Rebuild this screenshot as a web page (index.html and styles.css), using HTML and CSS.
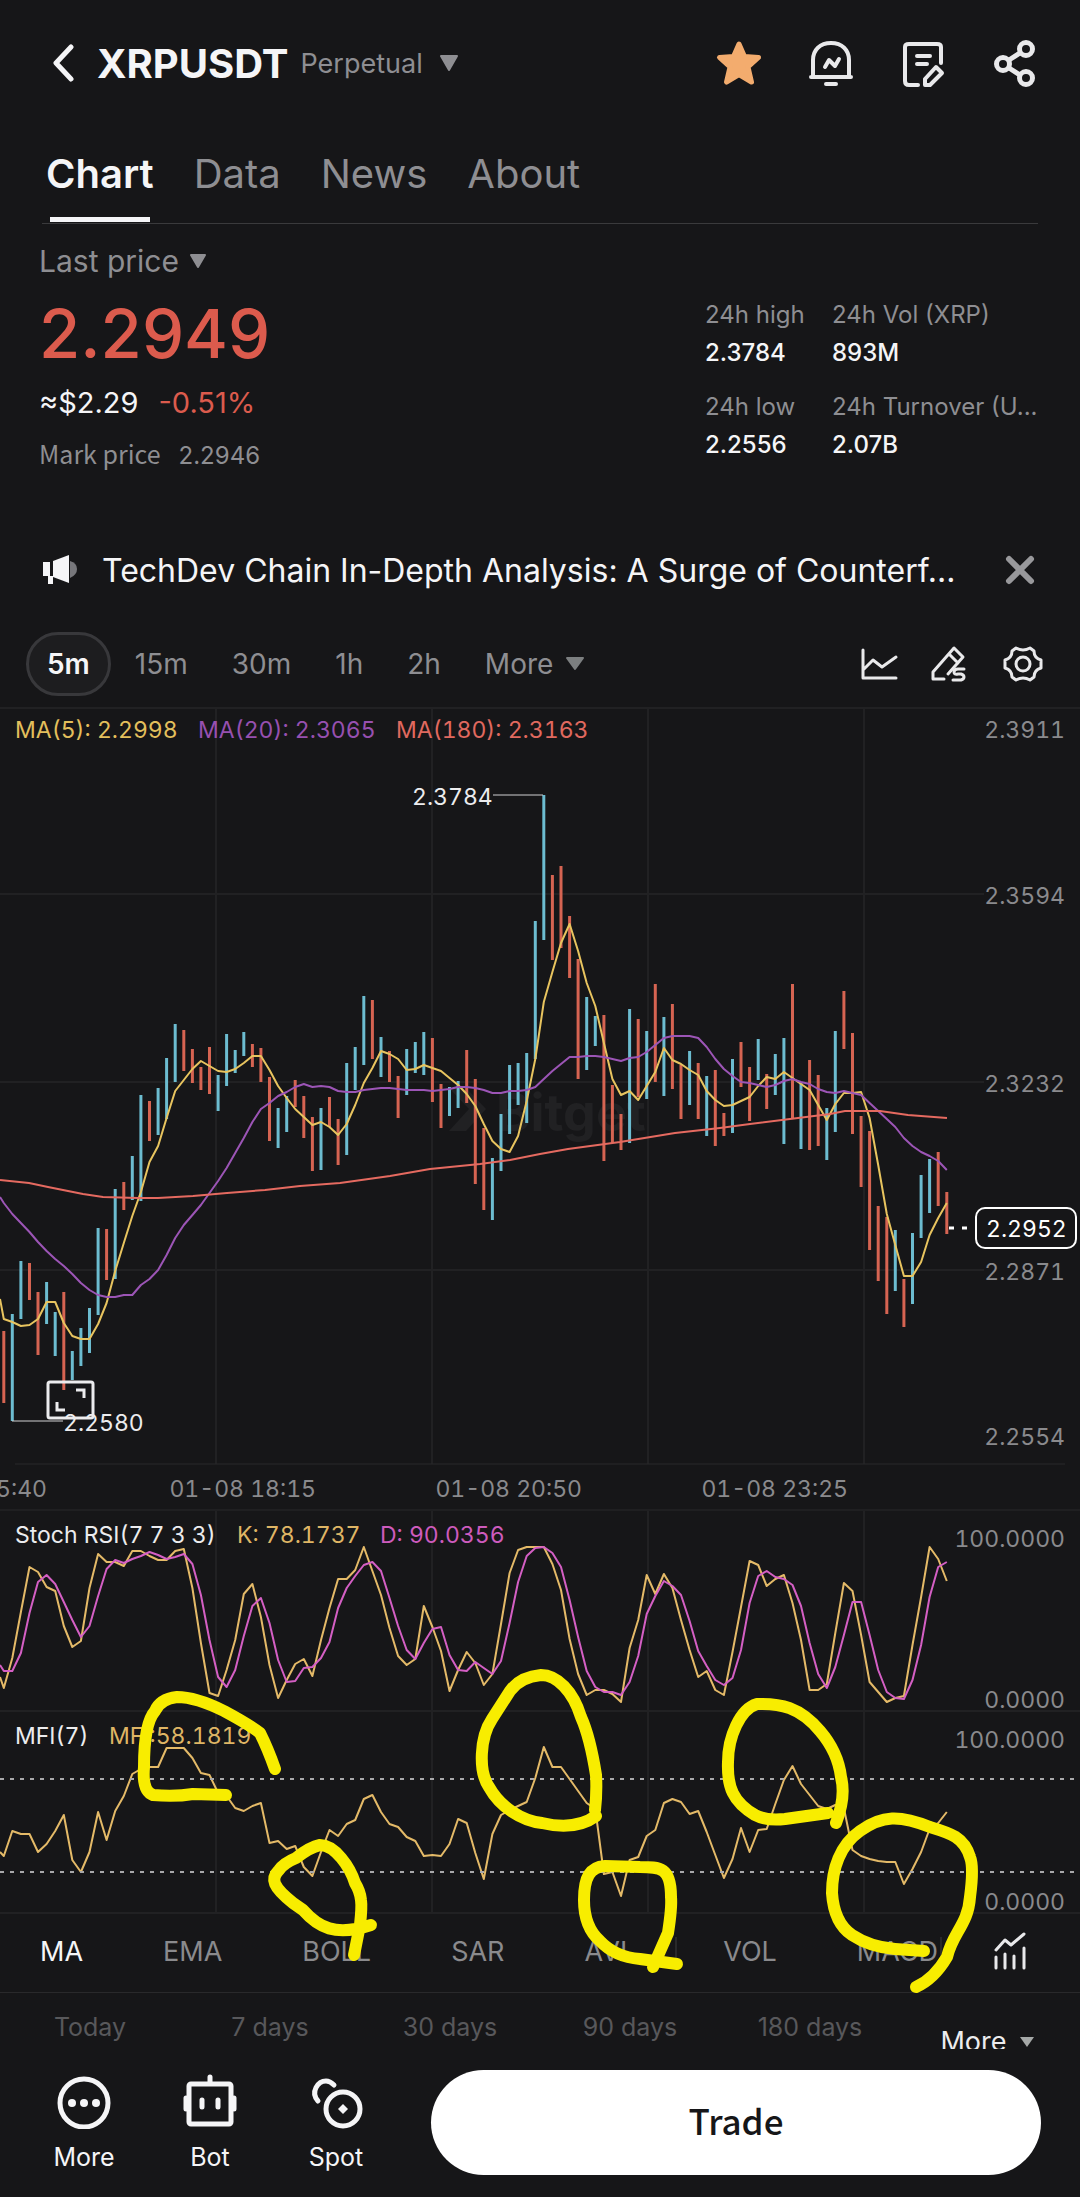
FILE: index.html
```html
<!DOCTYPE html>
<html lang="en">
<head>
    <meta charset="UTF-8">
    <meta name="viewport" content="width=device-width, initial-scale=1.0">
    <title>XRPUSDT Perpetual</title>
    <link rel="stylesheet" href="styles.css">
</head>
<body>
    <header class="topbar">
        <button class="icon-btn back" aria-label="Back">
            <svg width="24" height="38" viewBox="0 0 24 38"><path d="M20 3L5 19L20 35" fill="none" stroke="#f5f5f7" stroke-width="5" stroke-linecap="round" stroke-linejoin="round"/></svg>
        </button>
        <h1 class="symbol">XRPUSDT</h1>
        <button class="contract">Perpetual
            <svg width="20" height="16" viewBox="0 0 20 16"><path d="M2 1H18L10 15Z" fill="#8e8e92" stroke="#8e8e92" stroke-width="2" stroke-linejoin="round"/></svg>
        </button>
        <div class="actions">
            <button class="icon-btn" aria-label="Favourite">
                <svg width="48" height="48" viewBox="0 0 48 48"><path d="M24 5L29.5 17.5L43.500 18.500L33 28L36.500 43L24 35.500L11.500 43L15 28L4.500 18.500L18.500 17.500Z" fill="#f3ac6e" stroke="#f3ac6e" stroke-width="5" stroke-linejoin="round"/></svg>
            </button>
            <button class="icon-btn" aria-label="Price alert">
                <svg width="48" height="48" viewBox="0 0 48 48" fill="none" stroke="#e9e9eb" stroke-width="4" stroke-linecap="round" stroke-linejoin="round"><path d="M6 37V21C6 11 13 4 24 4S42 11 42 21V37M4 38H44M19 45H29"/><path d="M18 28L22 21L28 27L32 20"/></svg>
            </button>
            <button class="icon-btn" aria-label="Notes">
                <svg width="48" height="48" viewBox="0 0 48 48" fill="none" stroke="#e9e9eb" stroke-width="4" stroke-linecap="round" stroke-linejoin="round"><path d="M19 46H10Q6 46 6 42V8Q6 5 10 5H38Q42 5 42 8V24M18 17H31M18 25H28"/><path d="M37 28L43 34L31 46H26V40Z"/></svg>
            </button>
            <button class="icon-btn" aria-label="Share">
                <svg width="48" height="48" viewBox="0 0 48 48" fill="none" stroke="#e9e9eb" stroke-width="5"><circle cx="12" cy="25" r="6.500"/><circle cx="35" cy="10" r="6.500"/><circle cx="35" cy="39" r="6.500"/><path d="M18 21L29 14M18 29L29 36"/></svg>
            </button>
        </div>
    </header>

    <nav class="tabs">
        <a href="#chart" class="active">Chart</a>
        <a href="#data">Data</a>
        <a href="#news">News</a>
        <a href="#about">About</a>
    </nav>

    <section class="ticker">
        <div class="price-block">
            <button class="price-type">Last price
                <svg width="18" height="14" viewBox="0 0 18 14"><path d="M2 1H16L9 13Z" fill="#8e8e92" stroke="#8e8e92" stroke-width="2" stroke-linejoin="round"/></svg>
            </button>
            <p class="price">2.2949</p>
            <p class="fiat"><span>≈$2.29</span><span class="down">-0.51%</span></p>
            <p class="mark"><span>Mark price</span><span class="mark-value">2.2946</span></p>
        </div>
        <dl class="stats">
            <div><dt>24h high</dt><dd>2.3784</dd></div>
            <div><dt>24h Vol (XRP)</dt><dd>893M</dd></div>
            <div><dt>24h low</dt><dd>2.2556</dd></div>
            <div><dt>24h Turnover (U...</dt><dd>2.07B</dd></div>
        </dl>
    </section>

    <section class="notice">
        <svg width="36" height="32" viewBox="0 0 36 32"><path d="M28 7Q35 9 35 15T28 24Z" fill="#77777b"/><path d="M11 7L27 1V29L11 23Z" fill="#f5f5f7"/><path d="M1 8H8V22H11V30H6V22H1Z" fill="#f5f5f7"/></svg>
        <a href="#article">TechDev Chain In-Depth Analysis: A Surge of Counterf...</a>
        <button class="icon-btn" aria-label="Dismiss">
            <svg width="30" height="30" viewBox="0 0 30 30"><path d="M4 4L26 26M26 4L4 26" stroke="#98989b" stroke-width="6" stroke-linecap="round"/></svg>
        </button>
    </section>

    <section class="intervals">
        <button class="active">5m</button>
        <button>15m</button>
        <button>30m</button>
        <button>1h</button>
        <button>2h</button>
        <button>More
            <svg width="20" height="14" viewBox="0 0 20 14"><path d="M2 1H18L10 12Z" fill="#7c7f80" stroke="#7c7f80" stroke-width="2" stroke-linejoin="round"/></svg>
        </button>
        <div class="tools">
            <button class="icon-btn" aria-label="Chart type">
                <svg width="40" height="40" viewBox="0 0 40 40" fill="none" stroke="#e9e9eb" stroke-width="3" stroke-linecap="round" stroke-linejoin="round"><path d="M4 6V34H37M5 25L14 16L23 23L37 13"/></svg>
            </button>
            <button class="icon-btn" aria-label="Draw">
                <svg width="40" height="40" viewBox="0 0 40 40" fill="none" stroke="#e9e9eb" stroke-width="3" stroke-linecap="round" stroke-linejoin="round"><path d="M13 35H2V28L23 4L32 13L17 30M18 10L27 19"/><path d="M33 25H27Q23 25 23 28T27 30H30Q33 31 33 33T30 36H22"/></svg>
            </button>
            <button class="icon-btn" aria-label="Settings">
                <svg width="40" height="40" viewBox="0 0 40 40" fill="none" stroke="#e9e9eb" stroke-width="3" stroke-linejoin="round"><path d="M13 4Q20 8 27 4L31 7Q31 14 38 16V24Q31 26 31 33L27 36Q20 32 13 36L9 33Q9 26 2 24V16Q9 14 9 7Z"/><circle cx="20" cy="20" r="7"/></svg>
            </button>
        </div>
    </section>

    <main class="board">
        <svg class="chart" id="chart" viewBox="0 0 1080 1207">
            <g class="grid">
                <path d="M216 2V757M432 2V757M648 2V757M864 2V757M216 804V1206M432 804V1206M648 804V1206M864 804V1206"/>
                <path d="M0 187H984M0 375H984M0 563H984M0 1004H1080M0 1206H1080M0 1H1080"/>
                <path class="thin" d="M15 757H1065M0 803H1080"/>
            </g>
            <g class="watermark">
                <path d="M449 381H466L486 402L466 424H449L469 402Z"/>
                <text x="496" y="424">Bitget</text>
            </g>
            <g id="candles"></g>
            <g id="lines"></g>
            <path class="pointer" d="M493 88H543M12 714H63"/>
            <text class="note" x="412" y="98">2.3784</text>
            <text class="note" x="63" y="724">2.2580</text>
            <path class="last-line" d="M949 521H970"/>
            <path class="level" d="M0 1072H1080M0 1165H1080"/>
            <g class="axis">
                <text x="1065" y="31">2.3911</text>
                <text x="1065" y="197">2.3594</text>
                <text x="1065" y="385">2.3232</text>
                <text x="1065" y="573">2.2871</text>
                <text x="1065" y="738">2.2554</text>
                <text x="47" y="790">01-08 15:40</text>
                <text x="316" y="790">01-08 18:15</text>
                <text x="582" y="790">01-08 20:50</text>
                <text x="848" y="790">01-08 23:25</text>
                <text x="1065" y="840">100.0000</text>
                <text x="1065" y="1001">0.0000</text>
                <text x="1065" y="1041">100.0000</text>
                <text x="1065" y="1203">0.0000</text>
            </g>
            <rect class="last-box" x="976" y="501" width="100" height="40" rx="9"/>
            <text class="note strong" x="986" y="530">2.2952</text>
            <g class="expand">
                <rect x="48" y="675" width="45" height="36" rx="2"/>
                <path d="M76 683H84V691M57 695V703H65"/>
            </g>
            <g class="legend">
                <text x="15" y="31"><tspan class="ma5">MA(5): 2.2998</tspan></text>
                <text x="198" y="31"><tspan class="ma20">MA(20): 2.3065</tspan></text>
                <text x="396" y="31"><tspan class="ma180">MA(180): 2.3163</tspan></text>
                <text x="15" y="836">Stoch RSI(7 7 3 3)</text>
                <text x="237" y="836"><tspan class="k">K: 78.1737</tspan></text>
                <text x="380" y="836"><tspan class="d">D: 90.0356</tspan></text>
                <text x="15" y="1037">MFI(7)</text>
                <text x="109" y="1037"><tspan class="k">MFI:58.1819</tspan></text>
            </g>
        </svg>

        <section class="indicators">
            <button class="active">MA</button>
            <button>EMA</button>
            <button>BOLL</button>
            <button>SAR</button>
            <button>AVL</button>
            <i class="sep"></i>
            <button>VOL</button>
            <button>MACD</button>
            <i class="sep last"></i>
            <button class="icon-btn" aria-label="All indicators">
                <svg width="36" height="40" viewBox="0 0 36 40" fill="none" stroke="#e9e9eb" stroke-width="3" stroke-linecap="round" stroke-linejoin="round"><path d="M4 19L13 9L19 14L32 3M4 26V37M13 23V37M22 25V37M32 17V37"/></svg>
            </button>
        </section>

        <!-- hand drawn circles on the oversold / overbought zones -->
        <svg class="marker" viewBox="0 0 1080 1290">
            <path d="M275 1062Q268 1042 260 1026Q250 1018 224 1004Q196 990 177 990Q160 992 155 1004C146 1014 144 1040 144 1060Q142 1084 153 1088Q175 1090 193 1087L226 1088"/>
            <path d="M354 1248L360 1218Q362 1200 361 1193Q360 1184 355 1176C350 1160 335 1138 320 1138Q310 1140 296 1151Q284 1156 279 1163C270 1172 273 1180 293 1196L303 1203C318 1220 335 1230 371 1218"/>
            <path d="M595 1103Q597 1085 596 1068Q590 1030 581 1010C573 984 557 968 541 968Q520 970 510 984L492 1012C480 1030 478 1064 489 1080C500 1100 522 1114 542 1116Q575 1124 596 1109"/>
            <path d="M653 1260L668 1226Q672 1200 671 1190C671 1160 660 1160 640 1160L605 1159C590 1160 584 1170 584 1193Q584 1220 600 1234Q615 1250 640 1252L677 1257"/>
            <path d="M836 1116Q846 1090 841 1070Q838 1045 820 1024C800 1000 780 996 757 997C740 1002 728 1030 728 1055C727 1080 733 1095 755 1108Q766 1114 785 1112L828 1106"/>
            <path d="M916 1280Q934 1272 947 1250C953 1225 968 1218 970 1190Q974 1160 970 1150C964 1130 950 1126 930 1120C900 1108 882 1108 860 1124C840 1138 832 1162 832 1186Q834 1216 852 1228Q870 1240 895 1242L924 1244"/>
        </svg>
    </main>

    <section class="periods">
        <span>Today</span>
        <span>7 days</span>
        <span>30 days</span>
        <span>90 days</span>
        <span>180 days</span>
        <button>More
            <svg width="16" height="12" viewBox="0 0 16 12"><path d="M1 1H15L8 11Z" fill="#a5a8a7"/></svg>
        </button>
    </section>

    <footer class="bottombar">
        <a href="#more">
            <svg width="56" height="56" viewBox="0 0 56 56"><circle cx="28" cy="30" r="24" fill="none" stroke="#f5f5f7" stroke-width="5"/><g fill="#f5f5f7"><circle cx="16" cy="30" r="4"/><circle cx="28" cy="30" r="4"/><circle cx="40" cy="30" r="4"/></g></svg>
            More
        </a>
        <a href="#bot">
            <svg width="56" height="56" viewBox="0 0 56 56" fill="none" stroke="#f5f5f7" stroke-width="5" stroke-linecap="round"><rect x="7" y="11" width="42" height="40" rx="2"/><path d="M28 4V10M4 25V36M52 25V36M20 27V34M36 27V34"/></svg>
            Bot
        </a>
        <a href="#spot">
            <svg width="56" height="56" viewBox="0 0 56 56" fill="none" stroke="#f5f5f7" stroke-width="5" stroke-linecap="round"><circle cx="35" cy="36" r="17"/><path d="M10 28C2 19 10 8 18 8Q22 8 26 12"/><path d="M35 31L40 36L35 41L30 36Z" fill="#f5f5f7" stroke="none"/></svg>
            Spot
        </a>
        <button class="trade">Trade</button>
    </footer>

    <script src="chart.js"></script>
</body>
</html>
```
FILE: styles.css
```css
* {
    box-sizing: border-box;
}

body {
    margin: 0;
    background: #161618;
    color: #f5f5f7;
    font-family: Inter, "Liberation Sans", sans-serif;
    overflow-x: hidden;
}

button {
    font: inherit;
    color: inherit;
    background: none;
    border: none;
    padding: 0;
}

a {
    color: inherit;
    text-decoration: none;
}

p, h1, dl, dd {
    margin: 0;
}

svg {
    display: block;
    flex: none;
}

/* header */
.topbar {
    display: flex;
    align-items: center;
    height: 126px;
    padding: 0 41px 0 51px;
}

.back {
    width: 46px;
}

.symbol {
    font-size: 40px;
    font-weight: 700;
}

.contract {
    display: flex;
    align-items: center;
    gap: 16px;
    margin-left: 12px;
    font-size: 27px;
    color: #8e8e92;
}

.actions {
    display: flex;
    gap: 44px;
    margin-left: auto;
}

.tabs {
    display: flex;
    gap: 40px;
    height: 98px;
    margin: 0 42px;
    padding-left: 4px;
    border-bottom: 1px solid #3a3a3c;
    font-size: 40px;
    line-height: 96px;
    color: #8e8e92;
}

.tabs .active {
    position: relative;
    font-weight: 600;
    color: #f5f5f7;
}

.tabs .active::after {
    content: "";
    position: absolute;
    left: 4px;
    right: 4px;
    bottom: 1px;
    height: 5px;
    background: #f5f5f7;
}

/* price and 24h numbers */
.ticker {
    display: flex;
    justify-content: space-between;
    height: 286px;
    padding: 16px 40px 0 39px;
}

.price-type {
    display: flex;
    align-items: center;
    gap: 10px;
    font-size: 30px;
    line-height: 42px;
    color: #8e8e92;
}

.price {
    margin-top: 8px;
    font-size: 67px;
    font-weight: 500;
    line-height: 88px;
    color: #dc5b4d;
}

.fiat {
    display: flex;
    gap: 20px;
    font-size: 29px;
    line-height: 50px;
}

.down {
    color: #dc5b4d;
}

.mark {
    display: flex;
    align-items: baseline;
    gap: 18px;
    font-size: 25px;
    line-height: 50px;
    color: #8e8e92;
    font-family: "Noto Sans CJK SC", sans-serif;
}

.mark-value {
    font-family: Inter, sans-serif;
    font-size: 24px;
}

.stats {
    display: grid;
    grid-template-columns: 100px 208px;
    column-gap: 27px;
    align-content: start;
    padding-top: 57px;
    font-size: 24px;
    line-height: 36px;
}

.stats div {
    height: 92px;
}

.stats dt {
    color: #8e8e92;
    white-space: nowrap;
}

.stats dd {
    margin-top: 2px;
    font-weight: 500;
}

.notice {
    display: flex;
    align-items: center;
    height: 120px;
    padding: 0 45px 0 42px;
}

.notice a {
    margin: 0 auto 0 24px;
    font-size: 32px;
    white-space: nowrap;
}

/* interval switch */
.intervals {
    display: flex;
    align-items: center;
    gap: 44px;
    height: 77px;
    padding: 0 37px 10px 26px;
    font-size: 28px;
    color: #8e8e92;
}

.intervals button {
    display: flex;
    align-items: center;
    gap: 12px;
}

.intervals .active {
    height: 64px;
    padding: 0 18px;
    margin-right: -20px;
    border: 3px solid #38383b;
    border-radius: 32px;
    background: #1d1d1f;
    color: #f5f5f7;
    font-weight: 600;
}

.tools {
    display: flex;
    gap: 32px;
    margin-left: auto;
}

/* chart */
.board {
    position: relative;
}

.chart {
    width: 100%;
    font-size: 23px;
    font-variant-numeric: tabular-nums;
}

.grid path {
    stroke: #212123;
    stroke-width: 2;
}

.grid .thin {
    stroke: #29292b;
    stroke-width: 1;
}

.watermark {
    fill: #212123;
    font-size: 52px;
    font-weight: 700;
}

.series {
    fill: none;
    stroke-width: 2;
    stroke-linejoin: round;
}

.up-bar {
    stroke: #6cbcd0;
    stroke-width: 3;
}

.down-bar {
    stroke: #d66452;
    stroke-width: 3;
}

.pointer {
    stroke: #cfcfd1;
}

.note,
.legend {
    fill: #ececee;
}

.strong {
    fill: #ffffff;
}

.last-line {
    stroke: #ffffff;
    stroke-width: 3;
    stroke-dasharray: 5 8;
}

.last-box {
    fill: #161618;
    stroke: #ffffff;
    stroke-width: 2;
}

.level {
    stroke: #a9a9ab;
    stroke-width: 2;
    stroke-dasharray: 4 6;
}

.axis {
    fill: #8a8a8d;
    text-anchor: end;
}

.expand rect,
.expand path {
    fill: none;
    stroke: #ececee;
    stroke-width: 3;
}

.ma5 { fill: #e3bf5c; }
.ma20 { fill: #9750b0; }
.ma180 { fill: #e0695f; }
.k { fill: #dfb565; }
.d { fill: #cd5bbd; }

.marker {
    position: absolute;
    top: 0;
    left: 0;
    width: 100%;
    fill: none;
    stroke: #f8ed00;
    stroke-width: 12;
    stroke-linecap: round;
    stroke-linejoin: round;
    pointer-events: none;
}

.indicators {
    display: flex;
    align-items: center;
    gap: 80px;
    height: 79px;
    padding: 0 0 4px 40px;
    border-bottom: 1px solid #29292b;
    font-size: 27px;
    color: #8a8a8d;
}

.indicators .active {
    color: #f5f5f7;
}

.sep {
    flex: none;
    width: 2px;
    height: 28px;
    margin: 0 -34px 0 -40px;
    background: #29292b;
}

.sep.last {
    margin: 0 -30px 0 -78px;
}

.periods {
    display: grid;
    grid-template-columns: repeat(6, 1fr);
    height: 56px;
    padding-top: 14px;
    overflow: hidden;
    font-size: 25px;
    line-height: 40px;
    text-align: center;
    color: #58585b;
}

.periods button {
    display: flex;
    align-items: center;
    justify-content: center;
    gap: 12px;
    height: 40px;
    margin: 15px 5px 0 0;
    font-size: 27px;
    color: #ececee;
}

/* bottom bar */
.bottombar {
    display: flex;
    height: 148px;
    padding: 21px 39px 20px 21px;
}

.bottombar a {
    display: flex;
    flex-direction: column;
    align-items: center;
    gap: 10px;
    width: 126px;
    padding-top: 3px;
    font-size: 25px;
    line-height: 36px;
}

.trade {
    flex: 1;
    height: 105px;
    margin-left: 32px;
    padding-bottom: 7px;
    border-radius: 53px;
    background: #ffffff;
    color: #161618;
    font-family: "Noto Sans CJK SC", sans-serif;
    font-size: 35px;
    font-weight: 500;
}
```
FILE: chart.js
```js
const NS = "http://www.w3.org/2000/svg";
const STEP = 8.573;
const START = 3.75;
const TOP = 707;

// direction, high - low for every 5m candle
const candles = `d1331-1403 u1314-1421 u1261-1319 d1263-1300 d1292-1355 u1282-1324 u1312-1356 d1292-1390 u1351-1380 u1328-1366
u1308-1353 u1228-1315 d1229-1280 u1189-1279 d1182-1210 u1156-1200 u1095-1201 d1101-1141 u1088-1135 u1058-1119
u1024-1082 d1030-1071 d1049-1083 d1067-1090 d1047-1094 u1075-1111 u1034-1086 u1050-1073 u1032-1056 d1044-1067
d1048-1082 d1077-1141 u1108-1148 u1096-1132 d1080-1107 d1096-1138 d1117-1171 u1108-1170 d1097-1127 d1119-1165
u1063-1155 u1047-1090 u996-1065 d1000-1059 u1037-1077 d1051-1082 d1076-1118 u1049-1095 u1042-1073 u1032-1075
d1038-1102 d1084-1128 u1087-1116 u1081-1108 d1050-1103 d1079-1184 d1128-1210 u1158-1220 u1114-1171 u1065-1134
u1063-1105 u1053-1123 u921-1059 u795-940 d875-960 d866-948 d916-978 d959-1079 u997-1070 u1016-1046
d1015-1161 d1085-1143 d1114-1150 u1009-1143 d1019-1097 u1031-1099 d984-1082 u1017-1096 d1004-1089 d1065-1119
u1051-1105 d1063-1119 u1076-1136 d1070-1146 d1113-1136 u1059-1133 d1042-1087 d1067-1121 u1039-1080 d1074-1109
u1054-1095 u1038-1144 d984-1119 u1082-1149 d1060-1150 d1075-1146 u1108-1160 u1031-1132 d991-1049 d1033-1134
d1116-1187 d1131-1250 d1206-1281 d1217-1314 u1230-1291 d1279-1327 u1233-1304 u1175-1238 u1159-1213 d1152-1206 d1192-1234`;

const ma5 = [1319,1322,1326,1325,1319,1302,1302,1323,1336,1339,1339,1324,1303,1271,1243,1216,1192,1162,1146,1118,1091,1080,1069,1061,1066,1071,1072,1069,1063,1056,1056,1070,1086,1098,1109,1117,1125,1122,1127,1135,1124,1105,1083,1068,1051,1054,1059,1070,1069,1065,1068,1071,1078,1085,1094,1106,1124,1141,1149,1152,1136,1101,1059,1002,972,943,924,951,983,1006,1043,1079,1095,1091,1100,1086,1072,1048,1060,1064,1070,1075,1091,1100,1106,1105,1101,1097,1086,1077,1079,1072,1078,1084,1090,1105,1120,1104,1093,1093,1092,1118,1165,1214,1245,1276,1276,1262,1235,1218,1203];

const ma20 = [1203,1214,1223,1232,1242,1251,1259,1266,1274,1283,1290,1295,1297,1297,1295,1295,1285,1279,1270,1255,1238,1225,1215,1205,1193,1181,1168,1153,1138,1122,1109,1103,1096,1092,1087,1084,1087,1086,1087,1091,1092,1092,1090,1089,1088,1088,1089,1090,1090,1090,1091,1090,1089,1087,1087,1088,1090,1093,1093,1091,1091,1090,1087,1079,1071,1064,1057,1057,1056,1056,1057,1059,1061,1058,1057,1052,1045,1038,1036,1036,1036,1038,1047,1059,1069,1076,1082,1083,1085,1087,1085,1081,1079,1082,1084,1089,1092,1093,1091,1093,1095,1103,1111,1119,1127,1138,1146,1152,1156,1161,1170];

const stochK = [1688,1658,1612,1567,1572,1587,1591,1626,1647,1641,1588,1554,1562,1562,1566,1551,1551,1556,1560,1560,1551,1549,1588,1643,1693,1696,1670,1640,1594,1584,1617,1665,1698,1680,1664,1659,1676,1640,1608,1579,1579,1570,1547,1571,1595,1628,1656,1665,1659,1606,1627,1651,1691,1670,1652,1663,1685,1674,1624,1573,1550,1547,1547,1547,1564,1590,1639,1674,1695,1690,1690,1694,1702,1648,1620,1575,1594,1574,1588,1620,1650,1677,1671,1690,1695,1652,1607,1561,1565,1586,1579,1575,1603,1640,1690,1690,1684,1633,1583,1591,1635,1682,1692,1702,1698,1696,1645,1597,1547,1559,1581];

const stochD = [1671,1671,1653,1613,1582,1575,1584,1602,1620,1637,1626,1596,1569,1560,1563,1559,1556,1552,1555,1559,1557,1554,1564,1595,1640,1677,1687,1670,1636,1606,1598,1623,1660,1682,1681,1668,1667,1658,1642,1608,1588,1576,1565,1562,1571,1598,1626,1650,1659,1643,1629,1627,1655,1670,1671,1662,1668,1674,1661,1623,1582,1556,1548,1547,1553,1567,1600,1637,1671,1687,1692,1692,1695,1682,1656,1614,1596,1581,1586,1595,1621,1651,1666,1680,1685,1678,1650,1603,1576,1571,1577,1579,1585,1606,1643,1674,1688,1667,1635,1602,1602,1635,1670,1692,1698,1699,1680,1645,1597,1567,1562];

const mfi = [1856,1831,1834,1834,1852,1844,1831,1815,1860,1872,1852,1812,1840,1811,1796,1774,1769,1767,1767,1748,1748,1748,1758,1773,1775,1793,1796,1808,1811,1806,1803,1843,1841,1849,1846,1867,1876,1852,1830,1836,1824,1820,1799,1795,1812,1824,1827,1837,1841,1856,1855,1856,1844,1819,1823,1853,1879,1834,1815,1810,1806,1802,1778,1747,1767,1767,1779,1791,1803,1809,1874,1872,1896,1860,1857,1836,1830,1803,1799,1802,1814,1811,1832,1855,1878,1859,1828,1852,1830,1829,1804,1780,1766,1784,1795,1806,1809,1805,1808,1850,1856,1859,1861,1862,1862,1884,1869,1852,1829,1823,1812];

// the slow average is smooth, so only its turning points are kept
const ma180 = [[0,1180],[29,1183],[48,1187],[83,1194],[103,1197],[138,1198],[158,1198],[193,1196],[227,1193],[265,1190],[300,1186],[340,1183],[390,1176],[430,1169],[480,1164],[510,1160],[540,1154],[568,1149],[620,1142],[675,1133],[720,1128],[750,1124],[790,1119],[830,1114],[845,1111],[880,1111],[908,1115],[947,1118]];

function xAt(i) {
    return START + i * STEP;
}

function addPath(parent, d, attrs) {
    const path = document.createElementNS(NS, "path");
    path.setAttribute("d", d);
    for (const key in attrs) path.setAttribute(key, attrs[key]);
    parent.appendChild(path);
}

function drawLine(points, color) {
    const d = "M" + points.map(([x, y]) => x.toFixed(1) + " " + (y - TOP)).join("L");
    addPath(document.getElementById("lines"), d, { class: "series", stroke: color });
}

function toPoints(values, first) {
    return [[0, first]].concat(values.map((y, i) => [xAt(i), y]));
}

candles.split(/\s+/).forEach((c, i) => {
    const [high, low] = c.slice(1).split("-");
    const d = `M${xAt(i).toFixed(1)} ${high - TOP}V${low - TOP}`;
    addPath(document.getElementById("candles"), d, { class: c[0] === "u" ? "up-bar" : "down-bar" });
});

drawLine(toPoints(ma5, 1299), "#e8c45f");
drawLine(toPoints(ma20, 1197), "#9c55b6");
drawLine(ma180, "#e56a60");
drawLine(toPoints(stochK, 1677), "#e4ba68");
drawLine(toPoints(stochD, 1665), "#d45fc4");
drawLine(toPoints(mfi, 1852), "#e4ba68");
```
